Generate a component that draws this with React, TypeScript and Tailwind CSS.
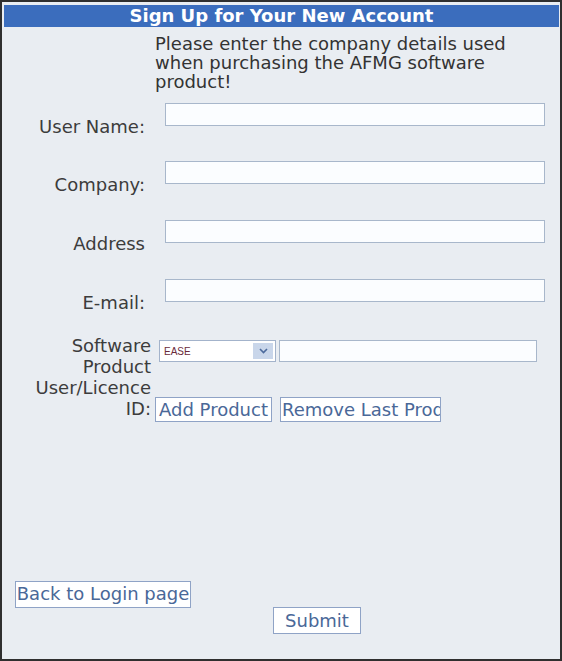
import React from "react";

const fields = [
  { label: "User Name:", mt: "mt-0" },
  { label: "Company:", mt: "mt-[35px]" },
  { label: "Address", mt: "mt-[36px]" },
  { label: "E-mail:", mt: "mt-[36px]" },
];

const SignUp = () => {
  return (
    <div className="w-[562px] h-[661px] border-2 border-[#2f2f2f] bg-[#e9edf2] pt-[3px] pl-[2px] pr-[1px] font-['DejaVu_Sans',Verdana,sans-serif] text-[18px] text-[#3c3c3c]">
      <div className="h-[22px] bg-[#3b6dbd] text-center font-bold leading-[22px] text-white">
        Sign Up for Your New Account
      </div>

      <div className="pl-[151px] pt-[7px] leading-[19px] text-[#333]">
        Please enter the company details used
        <br />
        when purchasing the AFMG software
        <br />
        product!
      </div>

      <div className="mt-[12px]">
        {fields.map((f) => (
          <div key={f.label} className={"flex h-[23px] " + f.mt}>
            <div className="w-[143px] pr-[2px] pt-[14px] text-right leading-[20px] whitespace-nowrap">
              {f.label}
            </div>
            <input
              type="text"
              className="ml-[18px] h-[23px] w-[380px] border border-[#a8b7cb] bg-[#fbfdff] outline-none"
            />
          </div>
        ))}
      </div>

      <div className="mt-[38px] flex">
        <div className="w-[150px] -mt-[5px] pr-[3px] text-right leading-[21px] whitespace-nowrap">
          Software
          <br />
          Product
          <br />
          User/Licence
          <br />
          ID:
        </div>
        <div className="flex flex-col">
          <div className="flex items-center">
            <div className="ml-[5px] flex h-[22px] w-[117px] items-center border border-[#a3b3cb] bg-white">
              <span className="flex-1 pl-[4px] font-['Liberation_Sans',Arial,sans-serif] text-[10px] text-[#6b2b3b]">
                EASE
              </span>
              <span className="mr-[2px] flex h-[16px] w-[20px] items-center justify-center bg-[#c9d6ea]">
                <svg width="9" height="6" viewBox="0 0 9 6">
                  <path d="M1 1 L4.5 4.5 L8 1" fill="none" stroke="#4c6a9c" strokeWidth="1.6" />
                </svg>
              </span>
            </div>
            <input
              type="text"
              className="ml-[3px] h-[22px] w-[258px] border border-[#a8b7cb] bg-[#fbfdff] outline-none"
            />
          </div>
          <div className="mt-[35px] flex gap-[8px] pl-[1px]">
            <button className="h-[25px] w-[117px] whitespace-nowrap border border-[#8fa3c6] bg-white px-0 text-[#4a6898] leading-[22px]">
              Add Product
            </button>
            <button className="h-[25px] w-[161px] overflow-hidden whitespace-nowrap border border-[#8fa3c6] bg-white pl-[1px] text-left text-[#4a6898] leading-[22px]">
              Remove Last Product
            </button>
          </div>
        </div>
      </div>

      <div className="mt-[158px] pl-[11px]">
        <button className="h-[27px] w-[176px] whitespace-nowrap border border-[#8fa3c6] bg-white text-[#4a6898] leading-[24px]">
          Back to Login page
        </button>
      </div>
      <div className="-mt-[1px] pl-[269px]">
        <button className="h-[27px] w-[88px] border border-[#8fa3c6] bg-white text-[#4a6898] leading-[24px]">
          Submit
        </button>
      </div>
    </div>
  );
};

export default function App() {
  return <SignUp />;
}
